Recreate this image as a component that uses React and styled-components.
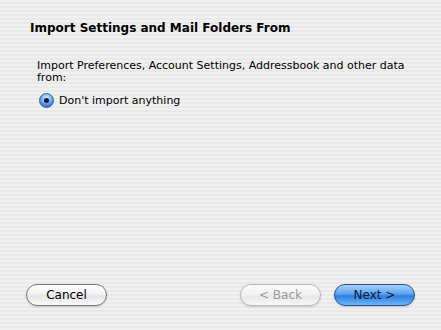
import styled, { createGlobalStyle } from 'styled-components';

const Global = createGlobalStyle`
  html, body { margin: 0; padding: 0; }
  body {
    width: 441px;
    height: 330px;
    overflow: hidden;
    font-family: 'DejaVu Sans', 'Liberation Sans', sans-serif;
  }
`;

const Window = styled.div`
  width: 441px;
  height: 330px;
  box-sizing: border-box;
  display: flex;
  flex-direction: column;
  background: repeating-linear-gradient(
    to bottom,
    #f0f0f0 0px,
    #f0f0f0 2px,
    #e9e9e9 2px,
    #e9e9e9 4px
  );
  padding: 21px 26px 24px 26px;
`;

const Title = styled.div`
  font-weight: bold;
  font-size: 12px;
  color: #000;
  padding-left: 4px;
`;

const Body = styled.div`
  flex: 1;
  padding: 25px 0 0 11px;
  font-size: 11px;
  color: #000;
`;

const Paragraph = styled.p`
  margin: 0;
  line-height: 12px;
  width: 380px;
`;

const RadioRow = styled.label`
  display: flex;
  align-items: center;
  gap: 5px;
  margin-top: 9px;
  margin-left: 2px;
`;

const Radio = styled.span`
  width: 15px;
  height: 15px;
  border-radius: 50%;
  box-sizing: border-box;
  border: 1px solid #3a5f9e;
  background: radial-gradient(circle at 50% 30%, #d6ecff 0%, #6fb1f0 45%, #2a6fd0 80%, #2456a6 100%);
  display: flex;
  align-items: center;
  justify-content: center;
  &::after {
    content: '';
    width: 5px;
    height: 5px;
    border-radius: 50%;
    background: #0a1a33;
  }
`;

const Footer = styled.div`
  display: flex;
  align-items: center;
`;

const Button = styled.button`
  width: 81px;
  height: 22px;
  border-radius: 11px;
  font-family: inherit;
  font-size: 12px;
  padding: 0;
  color: ${p => (p.disabled ? '#9a9a9a' : p.primary ? '#0d1b3a' : '#000')};
  border: 1px solid ${p => (p.primary ? '#2d4f8e' : p.disabled ? '#b8b8b8' : '#777')};
  background: ${p =>
    p.primary
      ? 'linear-gradient(to bottom, #a9d3fb 0%, #5aa2ee 45%, #2f7fe0 55%, #6cb6fb 100%)'
      : p.disabled
      ? 'linear-gradient(to bottom, #fbfbfb 0%, #f0f0f0 50%, #e8e8e8 55%, #f6f6f6 100%)'
      : 'linear-gradient(to bottom, #ffffff 0%, #f2f2f2 45%, #e4e4e4 55%, #fafafa 100%)'};
  box-shadow: 0 1px 2px rgba(0, 0, 0, 0.15);
`;

const Spacer = styled.div`
  flex: 1;
`;

const RightGroup = styled.div`
  display: flex;
  gap: 13px;
`;

export default function App() {
  return (
    <>
      <Global />
      <Window>
        <Title>Import Settings and Mail Folders From</Title>
        <Body>
          <Paragraph>
            Import Preferences, Account Settings, Addressbook and other data from:
          </Paragraph>
          <RadioRow>
            <Radio />
            Don't import anything
          </RadioRow>
        </Body>
        <Footer>
          <Button>Cancel</Button>
          <Spacer />
          <RightGroup>
            <Button disabled>&lt; Back</Button>
            <Button primary>Next &gt;</Button>
          </RightGroup>
        </Footer>
      </Window>
    </>
  );
}
